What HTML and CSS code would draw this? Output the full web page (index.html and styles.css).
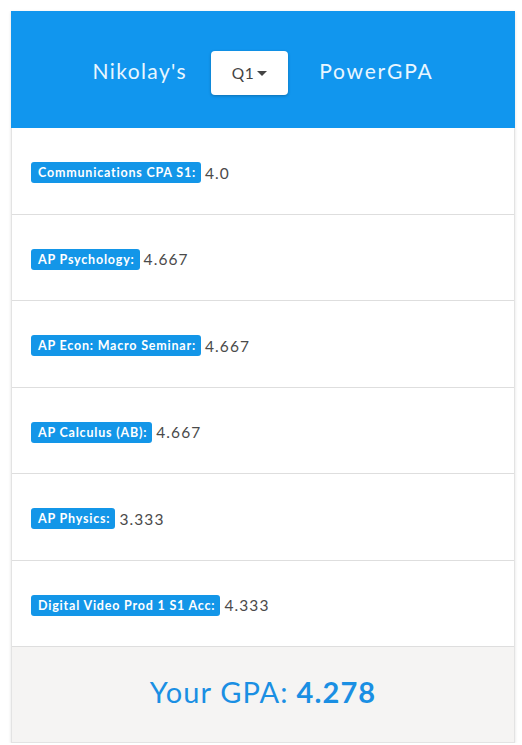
FILE: index.html
```html
<!DOCTYPE html>
<html>
<head>
<meta charset="utf-8">
<link rel="stylesheet" href="styles.css">
</head>
<body>
<div class="card">
  <div class="header">
    <span class="name">Nikolay's</span>
    <button class="quarter">Q1<span class="caret"></span></button>
    <span class="title">PowerGPA</span>
  </div>
  <div class="row"><span class="badge">Communications CPA S1:</span><span class="val">4.0</span></div>
  <div class="row"><span class="badge">AP Psychology:</span><span class="val">4.667</span></div>
  <div class="row"><span class="badge">AP Econ: Macro Seminar:</span><span class="val">4.667</span></div>
  <div class="row"><span class="badge">AP Calculus (AB):</span><span class="val">4.667</span></div>
  <div class="row"><span class="badge">AP Physics:</span><span class="val">3.333</span></div>
  <div class="row"><span class="badge">Digital Video Prod 1 S1 Acc:</span><span class="val">4.333</span></div>
  <div class="footer">Your GPA: <b>4.278</b></div>
</div>
</body>
</html>
```
FILE: styles.css
```css
html, body { margin: 0; padding: 0; background: #fff; }
body { padding: 11px 7px 0 11px; font-family: Lato, "Open Sans", sans-serif; }
.card {
  width: 504px;
  box-sizing: border-box;
  border: 1px solid #e3e3e3;
  border-top: 0;
  box-shadow: 0 1px 3px rgba(0,0,0,0.12);
  background: #fff;
}
.header {
  background: #1196ee;
  height: 117px;
  margin: 0 -1px;
  display: flex;
  align-items: center;
  justify-content: center;
  color: #e9f6ff;
  font-size: 21px;
  letter-spacing: 1.4px;
  padding-top: 2px;
  box-sizing: border-box;
}
.name { margin-right: 24px; }
.title { margin-left: 31px; letter-spacing: 1.8px; }
.quarter {
  width: 77px;
  height: 44px;
  margin-top: 5px;
  border: 0;
  border-radius: 4px;
  background: #fff;
  box-shadow: 0 1px 3px rgba(0,0,0,0.25);
  font-family: inherit;
  font-size: 15.5px;
  letter-spacing: 0.6px;
  color: #444;
  display: flex;
  align-items: center;
  justify-content: center;
  padding: 0;
}
.caret {
  display: inline-block;
  width: 0; height: 0;
  border-left: 5px solid transparent;
  border-right: 5px solid transparent;
  border-top: 5px solid #444;
  margin-left: 3px;
  margin-top: 1px;
}
.row {
  height: 86.5px;
  box-sizing: border-box;
  border-bottom: 1px solid #dedede;
  display: flex;
  align-items: center;
  padding: 4px 0 0 19px;
}
.badge {
  background: #1396e8;
  color: #fff;
  font-weight: 700;
  font-size: 12.5px;
  letter-spacing: 0.8px;
  line-height: 14px;
  padding: 4px 5px 3px 7px;
  border-radius: 3px;
}
.val {
  margin-left: 4px;
  font-size: 15.5px;
  color: #4a4a4a;
  letter-spacing: 1.1px;
}
.footer {
  background: #f5f4f3;
  height: 95px;
  display: flex;
  align-items: center;
  justify-content: center;
  font-size: 29px;
  letter-spacing: 1.1px;
  color: #1a8fe3;
  padding-bottom: 6px;
  box-sizing: border-box;
}
.footer b { font-weight: 700; margin-left: 8px; }
```
